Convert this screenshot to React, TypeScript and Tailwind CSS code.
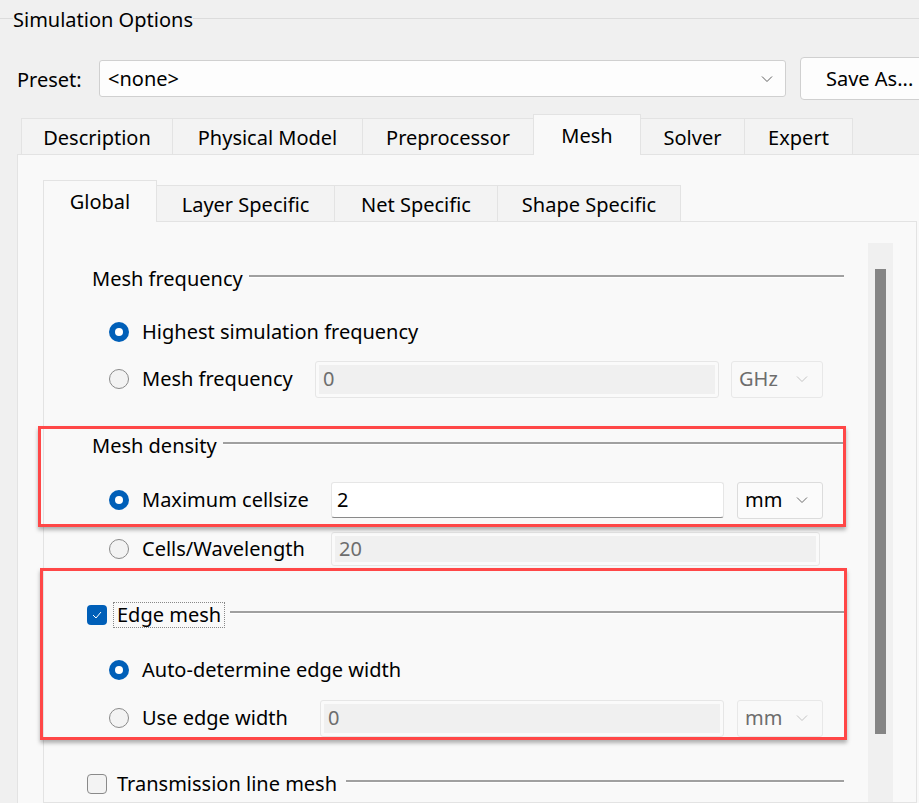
import React from "react";

const Chevron = ({ color = "#5f5f5f" }: { color?: string }) => (
  <svg width="12" height="8" viewBox="0 0 12 8">
    <polyline points="1,1.5 6,6.5 11,1.5" fill="none" stroke={color} strokeWidth="1" />
  </svg>
);

function Radio({ checked }: { checked?: boolean }) {
  if (checked) {
    return (
      <span className="w-[20px] h-[20px] shrink-0 rounded-full bg-[#005fb8] flex items-center justify-center">
        <span className="w-[8px] h-[8px] rounded-full bg-white" />
      </span>
    );
  }
  return <span className="w-[20px] h-[20px] shrink-0 rounded-full border border-[#8a8a8a] bg-[#f3f3f3]" />;
}

function Checkbox({ checked }: { checked?: boolean }) {
  if (checked) {
    return (
      <span className="w-[20px] h-[20px] shrink-0 rounded-[4px] bg-[#005fb8] flex items-center justify-center">
        <svg width="12" height="10" viewBox="0 0 12 10">
          <polyline points="2,5 5,8 10,2" fill="none" stroke="white" strokeWidth="1" />
        </svg>
      </span>
    );
  }
  return <span className="w-[20px] h-[20px] shrink-0 rounded-[4px] border border-[#8a8a8a] bg-[#f3f3f3]" />;
}

function Etched() {
  return <div className="flex-1 ml-[6px] mb-[6px] h-[3px] border-t-2 border-t-[#a0a0a0] border-b border-b-white" />;
}

function Heading({ children }: { children: React.ReactNode }) {
  return (
    <div className="h-[28px] flex items-center pl-[48px] pr-[24px]">
      <span className="whitespace-nowrap">{children}</span>
      <Etched />
    </div>
  );
}

function CheckHeading({ label, checked, focus }: { label: string; checked?: boolean; focus?: boolean }) {
  return (
    <div className="h-[28px] flex items-center pl-[43px] pr-[24px]">
      <Checkbox checked={checked} />
      <span
        className={`ml-[7px] px-[3px] whitespace-nowrap leading-[24px] ${
          focus ? "outline outline-1 outline-dotted outline-[#888]" : "outline-none"
        }`}
      >
        {label}
      </span>
      <Etched />
    </div>
  );
}

function DisabledInput({ value, width, height }: { value: string; width: string; height: string }) {
  return (
    <div className={`${width} ${height} border border-[#e6e6e6] rounded-[3px] p-[3px] bg-[#fafafa]`}>
      <div className="h-full bg-[#f0f0f0] flex items-center pl-[4px] text-[#6d6d6d]">{value}</div>
    </div>
  );
}

function Dropdown({ value, disabled, width }: { value: string; disabled?: boolean; width: string }) {
  return (
    <div
      className={`${width} h-[37px] rounded-[3px] border flex items-center justify-between pl-[7px] pr-[14px] ${
        disabled ? "border-[#e8e8e8] bg-[#f9f9f9] text-[#6d6d6d]" : "border-[#dcdcdc] bg-[#fbfbfb] text-black"
      }`}
    >
      <span>{value}</span>
      <Chevron color={disabled ? "#c4c4c4" : "#6a6a6a"} />
    </div>
  );
}

const outerTabs = [
  { label: "Description", w: "w-[152px]" },
  { label: "Physical Model", w: "w-[191px]" },
  { label: "Preprocessor", w: "w-[172px]" },
  { label: "Mesh", w: "w-[108px]", active: true },
  { label: "Solver", w: "w-[105px]" },
  { label: "Expert", w: "w-[109px]" },
];

const innerTabs = [
  { label: "Global", w: "w-[114px]", active: true },
  { label: "Layer Specific", w: "w-[179px]" },
  { label: "Net Specific", w: "w-[164px]" },
  { label: "Shape Specific", w: "w-[184px]" },
];

export default function App() {
  return (
    <div className="w-[919px] h-[803px] overflow-hidden bg-[#f0f0f0] text-black text-[20px] font-['Noto_Sans','DejaVu_Sans',sans-serif] flex flex-col">
      {/* Group title */}
      <div className="h-[40px] flex items-center shrink-0">
        <div className="w-[13px] h-px bg-[#dcdcdc] mb-[4px]" />
        <span className="whitespace-nowrap">Simulation Options</span>
        <div className="flex-1 h-px bg-[#dcdcdc] mb-[4px]" />
      </div>

      {/* Preset */}
      <div className="mt-[17px] h-[43px] flex items-center pl-[17px] shrink-0">
        <span className="w-[82px] shrink-0 pt-[2px]">Preset:</span>
        <div className="w-[687px] h-[37px] shrink-0 bg-[#fdfdfd] border border-[#d0d0d0] rounded-[3px] flex items-center justify-between pl-[8px] pr-[12px]">
          <span>&lt;none&gt;</span>
          <Chevron />
        </div>
        <div className="ml-[14px] w-[130px] h-[43px] shrink-0 bg-[#fdfdfd] border border-[#d0d0d0] rounded-[4px] flex items-center pl-[25px] whitespace-nowrap">
          Save As...
        </div>
      </div>

      {/* Outer tabs */}
      <div className="mt-[14px] h-[40px] flex items-end pl-[21px] shrink-0 relative z-10">
        {outerTabs.map((t) => (
          <div
            key={t.label}
            className={`${t.w} -mr-px shrink-0 border border-b-0 border-[#e3e3e3] flex items-center justify-center whitespace-nowrap ${
              t.active ? "h-[41px] -mb-px bg-[#f9f9f9] pt-[1px]" : "h-[36px] bg-[#f3f3f3] pt-[2px]"
            }`}
          >
            {t.label}
          </div>
        ))}
      </div>

      {/* Outer pane */}
      <div className="flex-1 ml-[17px] border-t border-l border-[#e3e3e3] bg-[#f9f9f9] pl-[25px] pt-[25px] flex flex-col">
        <div className="h-[41px] flex items-end shrink-0 relative z-10">
          {innerTabs.map((t) => (
            <div
              key={t.label}
              className={`${t.w} -mr-px shrink-0 border border-b-0 border-[#e3e3e3] flex items-center justify-center whitespace-nowrap ${
                t.active ? "h-[42px] -mb-px bg-[#f9f9f9] pt-[1px]" : "h-[36px] bg-[#f3f3f3] pt-[2px]"
              }`}
            >
              {t.label}
            </div>
          ))}
        </div>

        {/* Inner pane */}
        <div className="flex-1 w-[874px] border border-[#e3e3e3] bg-[#f9f9f9] flex">
          <div className="relative w-[824px] shrink-0 pt-[43px]">
            <Heading>Mesh frequency</Heading>

            <div className="mt-[20px] h-[38px] flex items-center pl-[65px]">
              <Radio checked />
              <span className="ml-[13px] whitespace-nowrap">Highest simulation frequency</span>
            </div>

            <div className="mt-[9px] h-[38px] flex items-center pl-[65px]">
              <Radio />
              <span className="ml-[13px] w-[173px] whitespace-nowrap">Mesh frequency</span>
              <DisabledInput value="0" width="w-[404px]" height="h-[37px]" />
              <div className="ml-[12px]">
                <Dropdown value="GHz" disabled width="w-[92px]" />
              </div>
            </div>

            <div className="mt-[34px]">
              <Heading>Mesh density</Heading>
            </div>

            <div className="mt-[21px] h-[38px] flex items-center pl-[65px]">
              <Radio checked />
              <span className="ml-[13px] w-[189px] whitespace-nowrap">Maximum cellsize</span>
              <div className="w-[393px] h-[36px] bg-white border border-[#e6e6e6] border-b-[#8a8a8a] rounded-[3px] flex items-center pl-[5px]">
                2
              </div>
              <div className="ml-[13px]">
                <Dropdown value="mm" width="w-[86px]" />
              </div>
            </div>

            <div className="mt-[13px] h-[34px] flex items-center pl-[65px]">
              <Radio />
              <span className="ml-[13px] w-[189px] whitespace-nowrap">Cells/Wavelength</span>
              <DisabledInput value="20" width="w-[489px]" height="h-[34px]" />
            </div>

            <div className="mt-[35px]">
              <CheckHeading label="Edge mesh" checked focus />
            </div>

            <div className="mt-[22px] h-[38px] flex items-center pl-[65px]">
              <Radio checked />
              <span className="ml-[13px] whitespace-nowrap">Auto-determine edge width</span>
            </div>

            <div className="mt-[10px] h-[38px] flex items-center pl-[65px]">
              <Radio />
              <span className="ml-[13px] w-[178px] whitespace-nowrap">Use edge width</span>
              <DisabledInput value="0" width="w-[404px]" height="h-[37px]" />
              <div className="ml-[13px]">
                <Dropdown value="mm" disabled width="w-[86px]" />
              </div>
            </div>

            <div className="mt-[33px]">
              <CheckHeading label="Transmission line mesh" />
            </div>

            {/* Annotation boxes */}
            <div className="absolute left-[-6px] top-[204px] w-[808px] h-[101px] border-[3px] border-[#ff4747] shadow-[0_3px_4px_rgba(0,0,0,0.3)] pointer-events-none" />
            <div className="absolute left-[-4px] top-[346px] w-[807px] h-[172px] border-[3px] border-[#ff4747] shadow-[0_3px_4px_rgba(0,0,0,0.3)] pointer-events-none" />
          </div>

          {/* Scrollbar */}
          <div className="mt-[21px] w-[25px] shrink-0 bg-[#f0f0f0] pl-[7px] pt-[26px]">
            <div className="w-[11px] h-[465px] bg-[#858585]" />
          </div>
        </div>
      </div>
    </div>
  );
}
